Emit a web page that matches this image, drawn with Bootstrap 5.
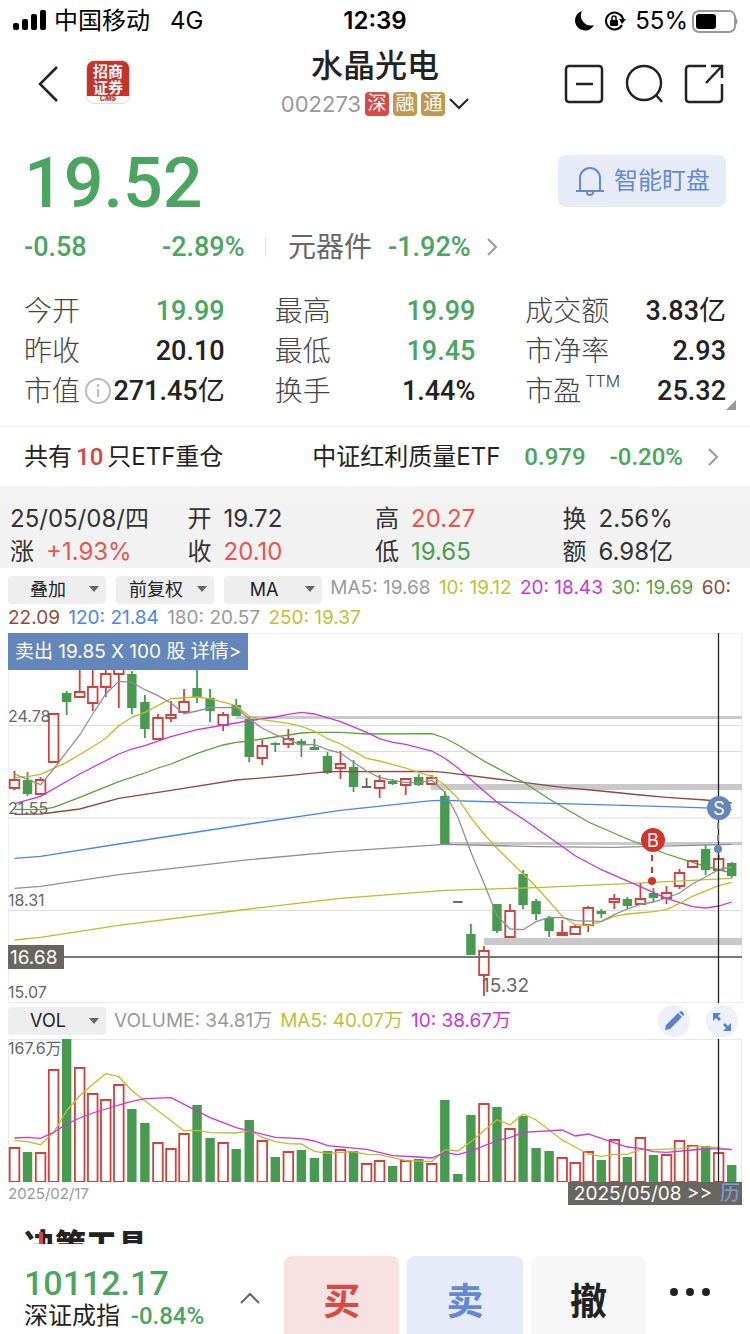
<!DOCTYPE html>
<html lang="zh-CN">
<head>
<meta charset="utf-8">
<meta name="viewport" content="width=device-width, initial-scale=1">
<title>水晶光电 002273</title>
<link href="https://cdn.jsdelivr.net/npm/bootstrap@5.3.0/dist/css/bootstrap.min.css" rel="stylesheet">
<style>
:root { --up:#d9463f; --down:#4ba561; --ink:#222; --mute:#666; --blue:#6488d4; }
body { font-family: Inter, "Noto Sans CJK SC", sans-serif; color: var(--ink); background:#fff; }
svg { display:block; }
svg text { font-family: Inter, "Noto Sans CJK SC", sans-serif; }
.num { font-family: Roboto, "Noto Sans CJK SC", sans-serif; font-weight:500; }
.up { color:var(--up); } .down { color:var(--down); }
.bare { border:0; background:none; padding:0; color:inherit; text-decoration:none; }
.status { height:42px; padding:0 12px; font-size:24px; line-height:42px; color:#000; display:grid; grid-template-columns:1fr auto 1fr; }
.head { height:86px; padding:0 26px; display:grid; grid-template-columns:1fr auto 1fr; }
.head h1 { font-size:32px; line-height:40px; font-weight:500; margin:4px 0 0; }
.code { font-size:22px; line-height:34px; color:#999; gap:4px; margin-top:1px; }
.back { margin-left:12px; }
.mk { width:24px; height:24px; border-radius:4px; background:#c09850; color:#fff; font-size:19px; line-height:24px; text-align:center; }
.mk-sz { background:#d94945; }
.logo { width:44px; height:44px; border-radius:8px; border:1px solid #ddd; background:linear-gradient(#c5332b 35px,#fff 35px); color:#fff; font:700 15px/16px "Noto Sans CJK SC",sans-serif; text-align:center; padding-top:2px; margin:0 0 4px 28px; }
.logo small { display:block; font:italic 800 7px/8px Inter,sans-serif; color:#c5332b; }
.scroller { min-height:0; overflow-y:auto; scrollbar-width:none; }
.scroller::-webkit-scrollbar { display:none; }
.quote { padding:22px 24px 15px; }
.price { font-size:70px; line-height:70px; }
.watch { height:52px; margin-top:7px; border-radius:8px; background:#e7ebf7; color:var(--blue); font-size:24px; padding:0 16px; gap:8px; }
.chg { font-size:28px; line-height:40px; margin-top:9px; color:var(--mute); }
.chg .num, .stats .num { font-size:27px; }
.chg-a { width:138px; }
.chg-b { width:104px; margin-right:22px; line-height:20px; border-right:1px solid #e5e5e5; }
.stats { display:grid; grid-template-columns:repeat(3,minmax(0,1fr)); column-gap:50px; margin:24px 0 0; font-size:28px; line-height:40px; }
.stats div { display:flex; justify-content:space-between; align-items:center; white-space:nowrap; }
.stats dt { font-weight:300; color:#444; display:flex; align-items:center; gap:4px; }
.stats dd { margin:0; }
.stats sup { font-size:16px; top:-10px; }
.corner { right:14px; bottom:16px; border-left:10px solid transparent; border-bottom:10px solid #999; }
.etf { height:60px; padding:0 31px 0 24px; border-top:1px solid #eee; font-size:24px; }
.day { background:#f2f2f2; border-top:16px solid #f4f4f5; font-size:24px; line-height:33px; color:#333; }
.day b { font-weight:400; margin-left:12px; }
.day .col-3:first-child { padding-left:10px; }
.day .up { color:#ea5450; } .day .down { color:#47a04e; }
.legend-line { margin:0; padding:5px 8px 0; font-size:19px; line-height:30px; }
.legend-line > span { margin-right:3px; }
.pick { display:inline-block; position:relative; width:98px; height:28px; vertical-align:middle; margin-right:10px; }
.pick-end { margin-right:3px; }
.pick select { appearance:none; width:100%; height:100%; border:0; border-radius:4px; background:#eee; color:#222; font-size:18px; line-height:28px; padding:0 18px 0 0; text-align:center; text-align-last:center; }
.pick::after { content:""; position:absolute; right:7px; top:11px; border:5px solid transparent; border-top:6px solid #666; border-bottom:0; }
.c5 { color:#999; } .c10 { color:#bfbf35; } .c20 { color:#c936dc; } .c30 { color:#5aa13c; } .c60 { color:#90493f; } .c120 { color:#4a86e8; }
.plot { margin:0 8px; }
.plot svg { width:100%; height:auto; }
.deal { left:0; top:0; height:37px; padding:0 7px; background:#6586bb; color:#fff; font-size:19px; line-height:37px; white-space:nowrap; }
.vol-bar { height:36px; padding:0 12px 0 8px; font-size:19px; }
.vol-bar .pick { margin-right:8px; }
.tool { width:32px; height:32px; border-radius:50%; background:#edf0fa; }
.dates { font-size:15px; line-height:23px; color:#999; }
.dates .sel { background:#686660; color:#fff; font-size:19px; padding:0 2px 0 6px; }
.dates a { color:#7c9fe0; font-size:20px; margin-left:8px; }
.block-title { font-size:31px; line-height:44px; font-weight:900; margin:18px 24px 0; }
.block-title::before { content:""; position:absolute; left:15px; top:9px; width:4px; height:24px; background:var(--up); }
.foot { height:90px; padding:12px 40px 0 24px; background:#fff; }
.foot .index { padding-top:11px; }
.foot .big { font-size:34px; line-height:32px; }
.foot .sub { font-size:24px; line-height:34px; }
.fold { margin:6px 24px 0 36px; }
.trade { height:78px; border-radius:8px 8px 0 0; font-size:37px; font-weight:700; line-height:78px; padding-top:7px; }
.buy { background:#f8e1e1; color:#d94a45; } .sell { background:#e7ebf7; color:var(--blue); } .undo { background:#f7f7f7; }
</style>
</head>
<body class="d-flex flex-column vh-100 overflow-hidden">
<div class="status">
  <div class="d-flex align-items-center">
    <svg width="34" height="22" viewBox="0 0 34 22"><rect x="1" y="13" width="6" height="7" rx="2"/><rect x="10" y="9" width="6" height="11" rx="2"/><rect x="19" y="4" width="6" height="16" rx="2"/><rect x="28" y="0" width="6" height="20" rx="2"/></svg>
    <span class="ms-2">中国移动</span><span class="ms-3 ps-1">4G</span>
  </div>
  <strong class="fw-semibold">12:39</strong>
  <div class="d-flex align-items-center justify-content-end">
    <svg width="20" height="20" viewBox="0 0 20 20"><path d="M7 0a10 10 0 1 0 12 14A10 10 0 0 1 7 0z"/></svg>
    <svg class="ms-2 me-2" width="24" height="22" viewBox="0 0 24 22"><path d="M19 7A8.500 8.500 0 1 0 19 15M18 5A9 9 0 0 1 20 12" fill="none" stroke="#000" stroke-width="2"/><path d="M16 9h7l-4 5z"/><rect x="7" y="10" width="8" height="6" rx="1"/><path d="M9 10V8a2 2 0 0 1 4 0v2" fill="none" stroke="#000" stroke-width="1.500"/></svg>
    <span>55%</span>
    <svg class="ms-1" width="46" height="24" viewBox="0 0 46 24"><rect x="1" y="2" width="42" height="21" rx="6" fill="none" stroke="#999" stroke-width="2"/><rect x="4" y="5" width="20" height="15" rx="3"/><path d="M44 9q3 3 0 7z" fill="#999"/></svg>
  </div>
</div>
<header class="head">
  <div class="d-flex align-items-center">
    <button class="bare back" aria-label="返回"><svg width="20" height="36" viewBox="0 0 20 36" fill="none" stroke="#222" stroke-width="2.500"><path d="M19 1L2 18l17 17"/></svg></button>
    <div class="logo">招商<br>证券<small>CMS</small></div>
  </div>
  <div class="text-center">
    <h1>水晶光电</h1>
    <button class="bare code d-flex align-items-center"><span>002273</span><span class="mk mk-sz">深</span><span class="mk">融</span><span class="mk">通</span><svg width="20" height="12" viewBox="0 0 20 12" fill="none" stroke="#222" stroke-width="2"><path d="M1 1l9 9 9-9"/></svg></button>
  </div>
  <div class="d-flex align-items-center justify-content-end gap-3">
    <button class="bare me-1" aria-label="删除自选"><svg width="40" height="40" viewBox="0 0 40 40" fill="none" stroke="#222" stroke-width="2.500"><rect x="2" y="2" width="36" height="36" rx="3"/><path d="M12 20h17"/></svg></button>
    <button class="bare me-1" aria-label="搜索"><svg width="40" height="40" viewBox="0 0 40 40" fill="none" stroke="#222" stroke-width="2.500"><circle cx="20" cy="19" r="17"/><path d="M32 31l6 7"/></svg></button>
    <button class="bare" aria-label="分享"><svg width="40" height="40" viewBox="0 0 40 40" fill="none" stroke="#222" stroke-width="2.500"><path d="M22 2H5a3 3 0 0 0-3 3v30a3 3 0 0 0 3 3h30a3 3 0 0 0 3-3V20M27 2h11v12M38 2L22 19"/></svg></button>
  </div>
</header>
<main class="scroller flex-grow-1">
  <section class="quote position-relative">
    <div class="d-flex justify-content-between align-items-start">
      <div class="num down price">19.52</div>
      <button class="bare watch d-flex align-items-center"><svg width="32" height="32" viewBox="0 0 32 32" fill="none" stroke="#6488d4" stroke-width="2"><path d="M2 26h28M6 26V13a10 10 0 0 1 20 0v13M13 27a3 3 0 0 0 6 0"/></svg>智能盯盘</button>
    </div>
    <div class="chg d-flex align-items-center">
      <span class="num down chg-a">-0.58</span><span class="num down chg-b">-2.89%</span>
      <a href="#" class="bare d-flex align-items-center">元器件<span class="num down ms-3">-1.92%</span><svg class="ms-3" width="10" height="18" viewBox="0 0 10 18" fill="none" stroke="#999" stroke-width="2"><path d="M1 1l8 8-8 8"/></svg></a>
    </div>
    <dl class="stats">
      <div><dt>今开</dt><dd class="num down">19.99</dd></div>
      <div><dt>最高</dt><dd class="num down">19.99</dd></div>
      <div><dt>成交额</dt><dd class="num">3.83<span class="fw-normal">亿</span></dd></div>
      <div><dt>昨收</dt><dd class="num">20.10</dd></div>
      <div><dt>最低</dt><dd class="num down">19.45</dd></div>
      <div><dt>市净率</dt><dd class="num">2.93</dd></div>
      <div><dt>市值<svg width="28" height="28" viewBox="0 0 28 28" fill="none" stroke="#bbb" stroke-width="2"><circle cx="14" cy="14" r="12"/><path d="M14 12v8M14 7v3"/></svg></dt><dd class="num">271.45<span class="fw-normal">亿</span></dd></div>
      <div><dt>换手</dt><dd class="num">1.44%</dd></div>
      <div><dt>市盈<sup>TTM</sup></dt><dd class="num">25.32</dd></div>
    </dl>
    <i class="corner position-absolute"></i>
  </section>
  <a href="#" class="bare etf d-flex align-items-center justify-content-between">
    <span>共有<span class="num up mx-1">10</span>只ETF重仓</span>
    <span class="d-flex align-items-center">中证红利质量ETF<span class="num down ms-4">0.979</span><span class="num down ms-4">-0.20%</span><svg class="ms-4" width="12" height="18" viewBox="0 0 12 18" fill="none" stroke="#999" stroke-width="2"><path d="M2 1l8 8-8 8"/></svg></span>
  </a>
  <section class="day">
    <div class="row g-0"><div class="col-3">25/05/08/四</div><div class="col-3">开<b>19.72</b></div><div class="col-3">高<b class="up">20.27</b></div><div class="col-3">换<b>2.56%</b></div></div>
    <div class="row g-0"><div class="col-3">涨<b class="up">+1.93%</b></div><div class="col-3">收<b class="up">20.10</b></div><div class="col-3">低<b class="down">19.65</b></div><div class="col-3">额<b>6.98亿</b></div></div>
  </section>
  <div class="legend-line"><label class="pick"><select aria-label="叠加"><option>叠加</option></select></label><label class="pick"><select aria-label="复权"><option>前复权</option></select></label><label class="pick pick-end"><select aria-label="主图指标"><option>MA</option></select></label>
    <span class="c5">MA5: 19.68</span>
    <span class="c10">10: 19.12</span>
    <span class="c20">20: 18.43</span>
    <span class="c30">30: 19.69</span>
    <span class="c60">60:</span>
    <span class="c60">22.09</span>
    <span class="c120">120: 21.84</span>
    <span class="c5">180: 20.57</span>
    <span class="c10">250: 19.37</span>
  </div>
  <section class="plot position-relative">
    <svg id="kline" viewBox="8 634 734 370" role="img" aria-label="日K线">
      <g stroke="#dcdcdc"><path d="M8 726.500h734M8 911.500h734M275 752.500h467"/><path d="M8 819h734M8 634h734v370H8z" fill="none" stroke="#eee" stroke-width="2"/></g>
      <g fill="#c9c9c9"><path d="M236 717h506v3H236zM431 785h311v6H431zM445 843h297v3H445zM484 939h258v7H484z"/></g>
      <path d="M8 958h734" stroke="#777" stroke-width="2"/>
      <g id="candles"></g>
      <g id="averages" fill="none" stroke-width="1.300"></g>
      <g fill="#666" font-size="16"><text x="8" y="723">24.78</text><text x="8" y="815">21.55</text><text x="8" y="907">18.31</text><text x="8" y="999">15.07</text><text x="482" y="993" font-size="19">15.32</text></g>
      <path d="M8 946h56v24H8z" fill="#686660"/><text x="10" y="965" font-size="19" fill="#fff">16.68</text>
      <path d="M718.500 633v371" stroke="#222" stroke-width="1.300"/>
      <path d="M652 856v22" stroke="#d0342c" stroke-width="2" stroke-dasharray="6 6"/><circle cx="652" cy="882" r="4" fill="#d0342c"/><circle cx="653" cy="841" r="12" fill="#d0342c"/><text x="653" y="848" font-size="18" fill="#fff" text-anchor="middle">B</text>
      <path d="M718 824v22" stroke="#6586bb" stroke-width="2" stroke-dasharray="6 6"/><circle cx="718" cy="850" r="4" fill="#6586bb"/><circle cx="719" cy="809" r="12" fill="#6586bb"/><text x="719" y="816" font-size="18" fill="#fff" text-anchor="middle">S</text>
    </svg>
    <button class="bare deal position-absolute">卖出 19.85 X 100 股 详情&gt;</button>
  </section>
  <div class="vol-bar d-flex align-items-center">
    <label class="pick"><select aria-label="副图指标"><option>VOL</option></select></label>
    <span class="c5">VOLUME: 34.81万</span><span class="c10 ms-2">MA5: 40.07万</span><span class="c20 ms-2">10: 38.67万</span>
    <button class="bare tool ms-auto me-3" aria-label="编辑"><svg width="32" height="32" viewBox="0 0 32 32" fill="#5c80d0"><path d="M7 25l1-5L20 8l4 4-12 12zM21 7l2-1q3 1 3 4l-1 1z"/></svg></button>
    <button class="bare tool" aria-label="全屏"><svg width="32" height="32" viewBox="0 0 32 32" fill="#5c80d0"><path d="M7 8h8l-3 3 3 3-2 2-3-3-3 3zM25 26h-8l3-3-3-3 2-2 3 3 3-3z"/></svg></button>
  </div>
  <section class="plot">
    <svg viewBox="8 1040 734 143" role="img" aria-label="成交量">
      <path d="M8 1040h734v144H8z" fill="none" stroke="#e8e8e8" stroke-width="2"/>
      <text x="8" y="1055" font-size="16" fill="#666">167.6万</text>
      <g id="volumes"></g>
      <g id="volavg" fill="none" stroke-width="1.300"></g>
      <path d="M718.500 1040v144" stroke="#222" stroke-width="1.300"/>
    </svg>
    <div class="dates d-flex justify-content-between"><span>2025/02/17</span><span class="sel">2025/05/08 &gt;&gt;<a href="#" class="bare">历</a></span></div>
  </section>
  <h2 class="block-title position-relative">决策工具</h2>
</main>
<footer class="foot d-flex justify-content-between">
  <div class="index"><div class="num down big">10112.17</div><div class="sub text-nowrap">深证成指 <span class="num down ms-1">-0.84%</span></div></div>
  <button class="bare fold align-self-center" aria-label="展开指数"><svg width="20" height="12" viewBox="0 0 20 12" fill="none" stroke="#666" stroke-width="2"><path d="M1 11l9-9 9 9"/></svg></button>
  <div class="d-flex flex-grow-1 gap-2"><button class="bare trade buy flex-fill">买</button><button class="bare trade sell flex-fill">卖</button><button class="bare trade undo flex-fill">撤</button></div>
  <button class="bare align-self-start mt-4 ms-4" aria-label="更多"><svg width="40" height="24" viewBox="0 0 40 24" fill="#222"><circle cx="4" cy="12" r="4"/><circle cx="20" cy="12" r="4"/><circle cx="36" cy="12" r="4"/></svg></button>
</footer>
<script src="https://cdn.jsdelivr.net/npm/bootstrap@5.3.0/dist/js/bootstrap.bundle.min.js"></script>
<script>
const X = i => 14.5 + 13.04 * i;
const RED = '#d0433c', GREEN = '#479a50', GREY = '#666';
// each day: colour, high, body top, body bottom, low, volume top
const days = `r 772 781 789 791 1148|g 773 781 795 797 1153|r 778 781 795 795 1153|r 715 715 763 763 1070|g 692 694 703 716 1040|r 660 693 698 698 1068|r 660 688 704 712 1094|r 660 675 688 698 1100|r 660 664 675 709 1085|g 672 675 709 715 1110
g 696 703 730 739 1124|r 715 719 740 740 1143|r 702 716 719 723 1149|r 690 703 713 713 1134|g 660 689 699 704 1106|g 690 699 712 723 1139|r 713 716 726 732 1143|g 700 706 717 717 1150|g 718 720 758 763 1121|r 741 747 759 766 1141
g 743 744 746 753 1158|r 730 740 745 749 1152|g 740 742 746 758 1151|g 740 748 751 751 1159|g 753 757 774 775 1152|r 752 765 769 780 1150|g 761 768 788 793 1152|k 779 788 789 789 1164|r 776 782 789 799 1161|g 780 782 785 786 1167
r 779 780 786 796 1161|g 775 778 786 787 1160|r 776 779 785 785 1164|g 792 797 845 845 1101|k 903 903 904 904 1175|g 925 935 956 956 1116|r 947 952 976 997 1104|g 905 905 932 934 1108|r 905 912 938 938 1129|g 871 875 906 910 1117
g 900 902 915 921 1149|g 917 919 932 938 1152|r 921 934 936 936 1158|r 926 928 935 936 1163|r 907 909 926 933 1152|g 910 912 915 919 1161|r 895 900 903 910 1140|g 898 900 907 910 1158|r 884 900 905 905 1138|g 889 894 899 903 1156
r 887 894 899 905 1155|r 870 874 887 890 1141|r 861 862 868 869 1146|g 846 850 871 876 1147|r 856 860 871 871 1153|g 863 864 877 879 1166`.split(/[|\n]/).map(s => s.split(' '));
let c = '', v = '';
days.forEach(([t, h, a, b, l, q], i) => {
  const x = X(i), y1 = +a, y2 = +b;
  if (t === 'r') {
    c += `<path d="M${x} ${h}V${y1}M${x} ${y2}V${l}M${x - 4.8} ${y1}h9.600V${y2}h-9.600z" fill="none" stroke="${RED}" stroke-width="1.800"/>`;
  } else if (t === 'g') {
    c += `<path d="M${x} ${h}V${l}" stroke="${GREEN}" stroke-width="1.800"/><path d="M${x - 4.7} ${y1}h9.400V${y2}h-9.400z" fill="${GREEN}"/>`;
  } else c += `<path d="M${x} ${h}V${l}M${x - 4.7} ${y1}h9.400" stroke="${GREY}" stroke-width="1.800"/>`;
  const red = t === 'r' || i === 27;
  v += red ? `<path d="M${x - 4.8} ${+q + 1}h9.600V1183h-9.600z" fill="none" stroke="${RED}" stroke-width="1.800"/>`
           : `<path d="M${x - 4.7} ${q}h9.400V1184h-9.400z" fill="${GREEN}"/>`;
});
document.getElementById('candles').innerHTML = c;
document.getElementById('volumes').innerHTML = v;
const lines = list => list.map(([col, s]) => `<polyline stroke="${col}" points="${s.split(' ').map(p => { const [i, y] = p.split(':'); return X(+i).toFixed(1) + ',' + y; }).join(' ')}"/>`).join('');
document.getElementById('averages').innerHTML = lines([
  ['#bdbd2b', '0:941 2:938.3 8:926.3 18:910 25:899.3 33:891.3 40:888.7 47:884.7 55:879.3'],
  ['#909090', '0:889.3 2:887.3 8:875.7 18:860.7 25:852.3 33:845.3 40:847.7 46:848.3 55:845.3'],
  ['#4a86e8', '0:859.3 2:857.3 8:845 18:825 25:811.3 32:801.7 33:801.3 37:803 42:804.7 50:807.7 54:809.3 55:810.7'],
  ['#90493f', '0:815.3 2:815 5:810 8:799.3 12:791.3 17:781 21:776.7 24:772.7 32:772.3 33:773.3 37:780 42:788.3 45:792 48:796 50:798.3 53:801 55:804'],
  ['#5aa13c', '0:810.3 2:810.7 3:808.3 5:798.3 8:782.7 10:774 11:769 12:765 14:754.3 16:746 17:743.3 18:742 22:734 23:733.3 25:733.3 27:735 32:734.7 33:739 34:746 36:762 39:783 41:800 44:823 47:840 50:855 52:863.3 53:867.3 55:874'],
  ['#c936dc', '0:804.7 2:797.3 5:775 8:755 9:750 10:746.7 12:737.7 14:730.7 17:724 18:721.7 20:718 21:715.3 22:713.3 23:715 25:722.7 27:733.3 28:739.7 29:743.3 30:745.3 32:752 33:759.3 34:769 36:792 37:803.3 39:820 41:838.3 43:856.7 45:870.7 48:887.7 50:899.3 52:907.7 53:909 54:907 55:903'],
  ['#bdbd2b', '0:778.7 1:777.7 2:775.3 4:763.3 6:747.7 7:739.3 8:726.7 9:718.3 10:713.3 12:699.7 14:698 15:699.7 17:706.7 18:717.3 19:720.7 21:724.3 22:727.3 23:732.3 24:739.7 25:745 27:759.3 28:762 30:769 31:773.3 32:777.3 33:786 34:799.3 35:818.7 36:835 37:849.3 39:875 40:887.7 41:902.3 42:917.3 43:925.7 44:926.7 45:922.7 46:917.3 47:915 49:912.7 50:910.7 51:904.3 52:897.3 54:886.7 55:883.3'],
  ['#909090', '0:775 2:785.7 3:770 5:736 6:715 7:695 8:682.3 9:683.3 10:690.7 11:696.7 12:704 13:714.7 14:712 15:708.7 17:708.3 18:720 19:729.3 20:735.7 21:740.7 22:746 23:745.3 24:750.7 25:754 26:763.3 27:772 28:778.7 30:783.7 31:783.7 32:781.3 33:793.3 34:818.3 35:853.3 36:884 37:916.7 38:930 39:930.7 40:922.7 41:918.3 42:918.7 43:921.7 45:922.3 46:915.7 47:910 48:905.3 49:903 50:899 51:894 52:884.7 53:878 54:870.7 55:868']
]);
document.getElementById('volavg').innerHTML = lines([
  ['#bdbd2b', '0:1141.3 1:1142.7 2:1145.7 3:1133.7 4:1111.7 5:1096.7 6:1085.3 7:1074.7 8:1077.7 9:1091.7 10:1101.7 13:1131.7 14:1131.3 15:1133.7 17:1134 18:1131.7 19:1138.3 20:1142.7 21:1144.7 22:1145 23:1152.3 24:1154.3 26:1152.7 27:1155.3 28:1155.7 30:1161.7 32:1162.7 33:1150.7 34:1152 35:1142.7 36:1131.7 37:1120.7 38:1126 39:1115 40:1121 42:1141 44:1155 45:1157.3 46:1155.3 47:1155.3 48:1150.3 49:1150.7 51:1149.7 52:1147.3 54:1148.7 55:1151'],
  ['#c936dc', '0:1139 1:1138.3 2:1139.3 3:1133.3 4:1125 5:1119 6:1114 7:1110 8:1106 9:1102.3 10:1099.7 12:1098.7 15:1118.7 17:1128.7 20:1138.3 22:1139.7 23:1142 24:1146.7 27:1150.3 29:1156.7 31:1158 32:1159 33:1153.7 34:1155.7 35:1152 37:1141.7 38:1138.7 39:1133.3 42:1131 43:1137 44:1135 45:1139.3 47:1148 48:1149.3 49:1152.7 50:1153.3 52:1151 53:1149.7 55:1150.3']
]);
</script>
</body>
</html>
